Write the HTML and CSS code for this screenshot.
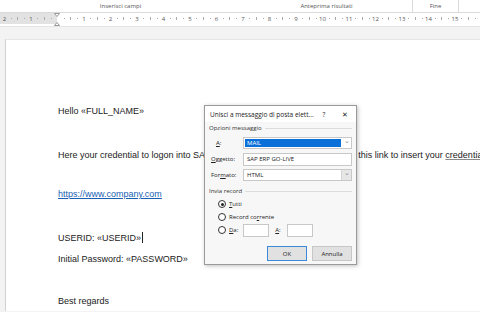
FILE: index.html
```html
<!DOCTYPE html>
<html lang="it">
<head>
    <meta charset="UTF-8">
    <meta name="viewport" content="width=device-width, initial-scale=1.0">
    <title>Stampa unione</title>
    <link rel="stylesheet" href="styles.css">
</head>
<body>
    <div class="ribbon">
        <div class="group g-fields">Inserisci campi</div>
        <div class="group g-preview">Anteprima risultati</div>
        <div class="group g-end">Fine</div>
        <div class="group g-rest"></div>
    </div>
    <div class="ruler">
        <svg width="480" height="13" viewBox="0 0 480 13">
            <rect x="0" y="0" width="57" height="11" fill="#e2e2e2"/>
            <g font-family="Open Sans, sans-serif" font-size="6" fill="#555" text-anchor="middle">
                <text x="4.5" y="8">2</text>
                <text x="31" y="8">1</text>
                <text x="84" y="8">1</text>
                <text x="110.5" y="8">2</text>
                <text x="137" y="8">3</text>
                <text x="163.5" y="8">4</text>
                <text x="190" y="8">5</text>
                <text x="216.5" y="8">6</text>
                <text x="243" y="8">7</text>
                <text x="269.5" y="8">8</text>
                <text x="296" y="8">9</text>
                <text x="322.5" y="8">10</text>
                <text x="349" y="8">11</text>
                <text x="375.5" y="8">12</text>
                <text x="402" y="8">13</text>
                <text x="428.5" y="8">14</text>
                <text x="455" y="8">15</text>
            </g>
            <g fill="#aaa">
                <rect x="64" y="5" width="1" height="1"/><rect x="70" y="4" width="1" height="3"/><rect x="77" y="5" width="1" height="1"/>
                <rect x="90" y="5" width="1" height="1"/><rect x="97" y="4" width="1" height="3"/><rect x="104" y="5" width="1" height="1"/>
                <rect x="117" y="5" width="1" height="1"/><rect x="123" y="4" width="1" height="3"/><rect x="130" y="5" width="1" height="1"/>
                <rect x="143" y="5" width="1" height="1"/><rect x="150" y="4" width="1" height="3"/><rect x="157" y="5" width="1" height="1"/>
                <rect x="170" y="5" width="1" height="1"/><rect x="176" y="4" width="1" height="3"/><rect x="183" y="5" width="1" height="1"/>
                <rect x="196" y="5" width="1" height="1"/><rect x="203" y="4" width="1" height="3"/><rect x="210" y="5" width="1" height="1"/>
                <rect x="223" y="5" width="1" height="1"/><rect x="229" y="4" width="1" height="3"/><rect x="236" y="5" width="1" height="1"/>
                <rect x="249" y="5" width="1" height="1"/><rect x="256" y="4" width="1" height="3"/><rect x="263" y="5" width="1" height="1"/>
                <rect x="276" y="5" width="1" height="1"/><rect x="282" y="4" width="1" height="3"/><rect x="289" y="5" width="1" height="1"/>
                <rect x="302" y="5" width="1" height="1"/><rect x="309" y="4" width="1" height="3"/><rect x="316" y="5" width="1" height="1"/>
                <rect x="329" y="5" width="1" height="1"/><rect x="335" y="4" width="1" height="3"/><rect x="342" y="5" width="1" height="1"/>
                <rect x="355" y="5" width="1" height="1"/><rect x="362" y="4" width="1" height="3"/><rect x="369" y="5" width="1" height="1"/>
                <rect x="382" y="5" width="1" height="1"/><rect x="388" y="4" width="1" height="3"/><rect x="395" y="5" width="1" height="1"/>
                <rect x="408" y="5" width="1" height="1"/><rect x="415" y="4" width="1" height="3"/><rect x="422" y="5" width="1" height="1"/>
                <rect x="435" y="5" width="1" height="1"/><rect x="441" y="4" width="1" height="3"/><rect x="448" y="5" width="1" height="1"/>
                <rect x="461" y="5" width="1" height="1"/><rect x="468" y="4" width="1" height="3"/><rect x="475" y="5" width="1" height="1"/>
                <rect x="11" y="5" width="1" height="1"/><rect x="17" y="4" width="1" height="3"/><rect x="24" y="5" width="1" height="1"/>
                <rect x="37" y="5" width="1" height="1"/><rect x="44" y="4" width="1" height="3"/><rect x="51" y="5" width="1" height="1"/>
            </g>
            <path d="M54.5 0.5 h5 l-2.5 3 z M54.5 12.5 h5 l-2.5 -3 z" fill="#fff" stroke="#999"/>
        </svg>
    </div>
    <div class="canvas">
        <div class="page">
            <p class="line l-hello">Hello «FULL_NAME»</p>
            <p class="line l-here">Here your credential to logon into SAP ERP GO-LIVE systems. Please use this link to insert your <span class="squiggle">credentials</span></p>
            <p class="line l-link"><a href="#">https://www.company.com</a></p>
            <p class="line l-user">USERID: «USERID»<span class="caret"></span></p>
            <p class="line l-pass">Initial Password: «PASSWORD»</p>
            <p class="line">Best regards</p>
        </div>
    </div>

    <div class="dialog">
        <div class="dlg-title">
            <span class="dlg-caption">Unisci a messaggio di posta elett...</span>
            <span class="dlg-help">?</span>
            <span class="dlg-close">✕</span>
        </div>
        <div class="dlg-body">
            <div class="section">Opzioni messaggio<span class="rule"></span></div>
            <div class="row">
                <label class="lbl lbl-a"><u>A</u>:</label>
                <div class="combo">
                    <span class="combo-value selected">MAIL</span>
                    <span class="combo-arrow">⌄</span>
                </div>
            </div>
            <div class="row">
                <label class="lbl"><u>O</u>ggetto:</label>
                <div class="textbox">SAP ERP GO-LIVE</div>
            </div>
            <div class="row">
                <label class="lbl">For<u>m</u>ato:</label>
                <div class="combo">
                    <span class="combo-value">HTML</span>
                    <span class="combo-arrow grey">⌄</span>
                </div>
            </div>
            <div class="section s-record">Invia record<span class="rule"></span></div>
            <div class="radio-row first"><span class="radio checked"></span><u>T</u>utti</div>
            <div class="radio-row"><span class="radio"></span>Record co<u>r</u>rente</div>
            <div class="radio-row">
                <span class="radio"></span><u>D</u>a:
                <span class="small-box b-from"></span>
                <u>A</u>:
                <span class="small-box b-to"></span>
            </div>
            <div class="buttons">
                <button class="btn btn-default">OK</button>
                <button class="btn">Annulla</button>
            </div>
        </div>
    </div>
</body>
</html>
```

FILE: styles.css
```css
html, body {
    margin: 0;
    width: 480px;
    height: 312px;
    overflow: hidden;
    background-color: #f3f3f3;
    font-family: "Open Sans", sans-serif;
}

.ribbon {
    display: flex;
    height: 12px;
    background-color: #fff;
    border-bottom: 1px solid #dadada;
    font-size: 6px;
    color: #555;
}

.group {
    display: flex;
    justify-content: center;
    align-items: center;
    border-right: 1px solid #dadada;
}

.g-fields { width: 241px; border-right: none; }
.g-preview { width: 171px; }
.g-end { width: 45px; }
.g-rest { flex: 1; border-right: none; }

.ruler {
    height: 13px;
    background-color: #fff;
    border-bottom: 1px solid #e4e4e4;
}

.ruler svg {
    display: block;
}

.canvas {
    padding: 12px 0 0 5px;
    height: 272px;
    overflow: hidden;
}

.page {
    background-color: #fff;
    border-left: 1px solid #d0d0d0;
    border-top: 1px solid #e6e6e6;
    height: 300px;
    padding: 61px 0 0 52px;
    font-family: "Liberation Sans", sans-serif;
    font-size: 9px;
    color: #222;
    overflow: hidden;
}

.line {
    margin: 0;
    height: 20px;
    line-height: 20px;
    white-space: nowrap;
}

.l-hello { margin-bottom: 24px; }
.l-here { margin-bottom: 19px; }
.l-link { margin-bottom: 24px; }
.l-user { margin-bottom: 1px; }
.l-pass { margin-bottom: 22px; }

.line a {
    color: #1a5fb4;
}

.squiggle {
    text-decoration: underline;
    text-decoration-color: #8a8a8a;
}

.caret {
    display: inline-block;
    width: 1px;
    height: 11px;
    background-color: #222;
    vertical-align: -2px;
    margin-left: 1px;
}

.dialog {
    position: absolute;
    left: 204px;
    top: 105px;
    width: 151px;
    height: 158px;
    background-color: #f7f7f7;
    border: 1px solid #9a9a9a;
    box-shadow: 1px 1px 4px rgba(0, 0, 0, 0.25);
    font-size: 6px;
    color: #222;
    white-space: nowrap;
}

.dlg-title {
    display: flex;
    align-items: center;
    height: 16px;
    padding: 0 0 0 5px;
    background-color: #fff;
    font-size: 6.5px;
}

.dlg-caption {
    flex: 1;
}

.dlg-help {
    width: 22px;
    text-align: center;
}

.dlg-close {
    width: 23px;
    text-align: center;
    font-size: 7px;
}

.dlg-body {
    padding: 0 4px 0 4px;
}

.section {
    display: flex;
    align-items: center;
    gap: 3px;
    height: 12px;
    color: #333;
}

.rule {
    flex: 1;
    border-top: 1px solid #dcdcdc;
}

.s-record {
    margin-top: 3px;
}

.row {
    display: flex;
    align-items: center;
    height: 14px;
    margin-top: 2px;
}

.lbl {
    width: 32px;
    padding-left: 2px;
}

.lbl-a {
    padding-left: 7px;
    width: 27px;
}

.combo, .textbox {
    display: flex;
    align-items: center;
    flex: 1;
    height: 12px;
    background-color: #fff;
    border: 1px solid #c8c8c8;
    box-sizing: border-box;
}

.textbox {
    height: 13px;
    padding-left: 3px;
}

.combo-value {
    flex: 1;
    height: 8px;
    line-height: 8px;
    margin: 0 1px 0 1px;
    padding-left: 2px;
}

.combo-value.selected {
    background-color: #0a6fd8;
    color: #fff;
}

.combo-arrow {
    width: 9px;
    height: 10px;
    line-height: 6px;
    text-align: center;
    color: #888;
    font-size: 7px;
}

.combo-arrow.grey {
    background-color: #e6e6e6;
    border-left: 1px solid #d4d4d4;
}

.radio-row {
    display: flex;
    align-items: center;
    height: 12px;
    padding-left: 9px;
}

.radio-row.first {
    margin-top: 1px;
}

.radio-row + .radio-row {
    margin-top: 1px;
}

.radio-row:last-of-type {
    height: 14px;
}

.radio {
    width: 6px;
    height: 6px;
    border: 1px solid #333;
    border-radius: 50%;
    background-color: #fff;
    margin-right: 3px;
    box-sizing: content-box;
    position: relative;
}

.radio.checked::after {
    content: "";
    position: absolute;
    left: 1.5px;
    top: 1.5px;
    width: 3px;
    height: 3px;
    border-radius: 50%;
    background-color: #222;
}

.small-box {
    width: 26px;
    height: 13px;
    background-color: #fff;
    border: 1px solid #c8c8c8;
    box-sizing: border-box;
}

.b-from { margin: 0 6px 0 5px; }
.b-to { margin-left: 6px; }

.buttons {
    display: flex;
    justify-content: flex-end;
    gap: 5px;
    margin-top: 10px;
}

.btn {
    width: 40px;
    height: 15px;
    padding: 0;
    font-family: "Open Sans", sans-serif;
    font-size: 6px;
    color: #222;
    background-color: #e1e1e1;
    border: 1px solid #c6c6c6;
}

.btn-default {
    border: 1px solid #3b8ad8;
}
```
